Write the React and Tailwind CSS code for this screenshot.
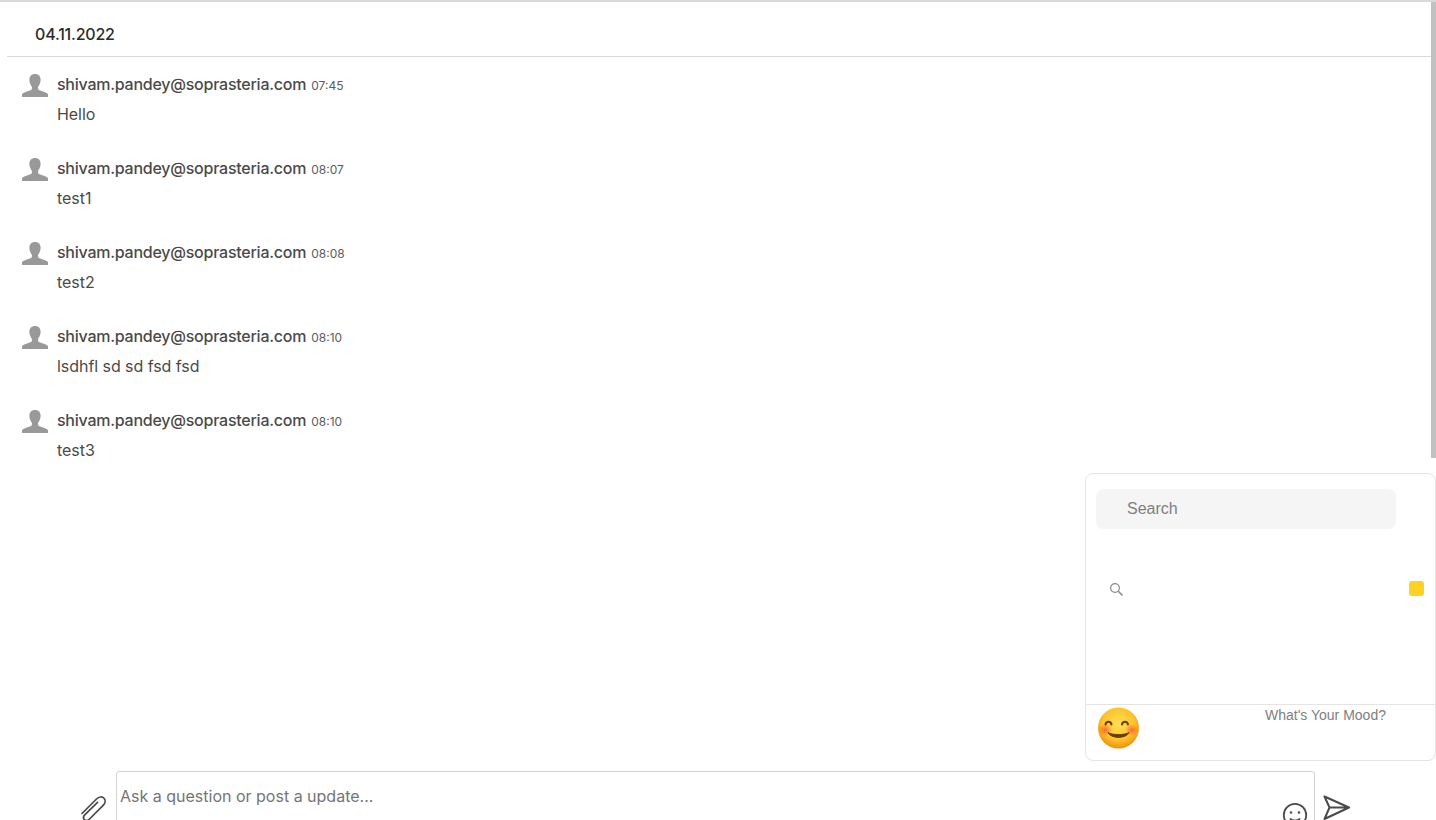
import React from "react";

const messages = [
  { time: "07:45", text: "Hello" },
  { time: "08:07", text: "test1" },
  { time: "08:08", text: "test2" },
  { time: "08:10", text: "lsdhfl sd sd fsd fsd" },
  { time: "08:10", text: "test3" },
];

const UserIcon = () => (
  <svg width="26" height="23" viewBox="0 0 26 24" preserveAspectRatio="none" className="shrink-0">
    <path
      fill="#999999"
      d="M13 0c3.600 0 5.600 2.400 5.600 6 0 2.800-1 5.400-2.500 7.200v2.100c0 1 1.200 1.600 3.500 2.400 3 1 5.600 1.800 6.400 3.300v3H0v-3c.8-1.500 3.400-2.300 6.400-3.300 2.300-.8 3.500-1.400 3.500-2.400v-2.100C8.400 11.400 7.400 8.800 7.400 6 7.400 2.400 9.400 0 13 0z"
    />
  </svg>
);

const Message = ({ time, text }) => (
  <div className="flex h-[84px] pl-[22px]">
    <div className="pt-[17px] w-[35px] shrink-0">
      <UserIcon />
    </div>
    <div className="pt-[15px]">
      <div className="flex items-baseline h-[24px]">
        <span className="text-[16px] font-medium text-[#4a4a4a] tracking-[-0.245px]">
          shivam.pandey@soprasteria.com
        </span>
        <span className="text-[12px] text-[#5c5c5c] ml-[5px]">{time}</span>
      </div>
      <p className="text-[16px] leading-[24px] mt-[6px] text-[#4a4a4a] tracking-[-0.05px]">{text}</p>
    </div>
  </div>
);

const SmileEmoji = () => (
  <svg width="44" height="44" viewBox="0 0 44 44">
    <defs>
      <radialGradient id="face" cx="50%" cy="40%" r="60%">
        <stop offset="0%" stopColor="#ffdf55" />
        <stop offset="65%" stopColor="#fdc32b" />
        <stop offset="100%" stopColor="#ef8f10" />
      </radialGradient>
      <radialGradient id="blush" cx="50%" cy="50%" r="50%">
        <stop offset="0%" stopColor="#ff5a30" stopOpacity="0.85" />
        <stop offset="100%" stopColor="#ff5a30" stopOpacity="0" />
      </radialGradient>
    </defs>
    <circle cx="22.500" cy="22" r="20.500" fill="url(#face)" />
    <ellipse cx="9" cy="24" rx="7" ry="6" fill="url(#blush)" />
    <ellipse cx="36" cy="24" rx="7" ry="6" fill="url(#blush)" />
    <path d="M9.500 18.500c.6-3.600 5.400-3.600 6 0" fill="none" stroke="#6b3d0a" strokeWidth="2" strokeLinecap="round" />
    <path d="M26 18.500c.6-3.600 5.400-3.600 6 0" fill="none" stroke="#6b3d0a" strokeWidth="2" strokeLinecap="round" />
    <path d="M12 26.500c3 6.500 18 6.500 21 0-4 2.800-17 2.800-21 0z" fill="#6b3d0a" stroke="#6b3d0a" strokeWidth="1" strokeLinejoin="round" />
  </svg>
);

const MoodPicker = () => (
  <div className="absolute left-[1085px] top-[471px] w-[351px] h-[288px] bg-white border border-[#e4e4e4] rounded-[8px] flex flex-col">
    <div className="flex-1 pt-[15px] pl-[10px] pr-[14px]">
      <div className="w-[300px] h-[40px] bg-[#f5f5f5] rounded-[8px] pl-[31px] flex items-center font-['Liberation_Sans',sans-serif] text-[16px] text-[#808080]">
        Search
      </div>
      <div className="flex items-center justify-between mt-[52px] pl-[13px]">
        <svg className="translate-y-[1px]" width="15" height="15" viewBox="0 0 15 15" fill="none" stroke="#8a8a8a" strokeWidth="1.200">
          <circle cx="6" cy="6" r="4.400" />
          <path d="M9.300 9.300 13.500 13.500" strokeWidth="1.600" />
        </svg>
        <div className="w-[15px] h-[15px] bg-[#ffd124] rounded-[3px] mr-[-3px]"></div>
      </div>
    </div>
    <div className="h-[56px] border-t border-[#e4e4e4] flex pl-[10px]">
      <div className="pt-[1px]">
        <SmileEmoji />
      </div>
      <span className="ml-[125px] mt-[2px] font-['Liberation_Sans',sans-serif] text-[14px] leading-[16px] text-[#808080]">
        What's Your Mood?
      </span>
    </div>
  </div>
);

const Composer = () => (
  <div className="flex mt-[6px] h-[60px]">
    <div className="w-[116px] shrink-0 flex justify-end pr-[7px] pt-[23px]">
      <svg width="30" height="30" viewBox="0 0 30 30" fill="none" stroke="#4a4a4a" strokeWidth="1.700" strokeLinecap="round" strokeLinejoin="round">
        <path d="M3 19.500 17.500 5c2.600-2.600 6-2.500 7.500-.8 1.600 1.800 1.500 4.800-.8 7.100L10.500 25c-1.700 1.700-3.800 1.900-5.100.7-1.300-1.300-1.100-3.400.6-5.100L18.500 8.300" />
      </svg>
    </div>
    <div className="w-[1199px] h-[60px] shrink-0 border border-[#d4d4d4] rounded-[3px] relative pl-[3px] pt-[13px] text-[16px] leading-[22px] text-[#757575]">
      Ask a question or post a update...
      <svg className="absolute right-[6px] top-[30px]" width="26" height="26" viewBox="0 0 26 26" fill="none" stroke="#4a4a4a" strokeWidth="1.800">
        <circle cx="13" cy="13" r="11.200" />
        <circle cx="9" cy="10.500" r="1.200" fill="#4a4a4a" stroke="none" />
        <circle cx="17" cy="10.500" r="1.200" fill="#4a4a4a" stroke="none" />
        <path d="M8 16.500c2.500 2.800 7.500 2.800 10 0" />
      </svg>
    </div>
    <div className="pl-[8px] pt-[24px]">
      <svg width="28" height="28" viewBox="0 0 28 28" fill="none" stroke="#4a4a4a" strokeWidth="2" strokeLinejoin="round">
        <path d="M1.500 1.500 26 12.500 1.500 24 6.500 12.500zM6.500 12.500H26" />
      </svg>
    </div>
  </div>
);

const App = () => {
  return (
    <div className="relative w-[1436px] h-[820px] overflow-hidden bg-white font-['Inter',sans-serif] border-t-2 border-[#d9d9d9]">
      <div className="ml-[7px] mr-[5px] h-[55px] border-b border-[#d9d9d9] pl-[28px] pt-[20px] text-[16px] leading-[24px] font-medium text-[#2b2b2b] tracking-[-0.2px]">
        04.11.2022
      </div>
      <div className="h-[420px]">
        {messages.map((m, i) => (
          <Message key={i} time={m.time} text={m.text} />
        ))}
      </div>
      <div className="h-[288px]"></div>
      <Composer />
      <div className="absolute right-0 top-0 w-[5px] h-[456px] bg-[#c1c1c1]"></div>
      <MoodPicker />
    </div>
  );
};

export default App;
